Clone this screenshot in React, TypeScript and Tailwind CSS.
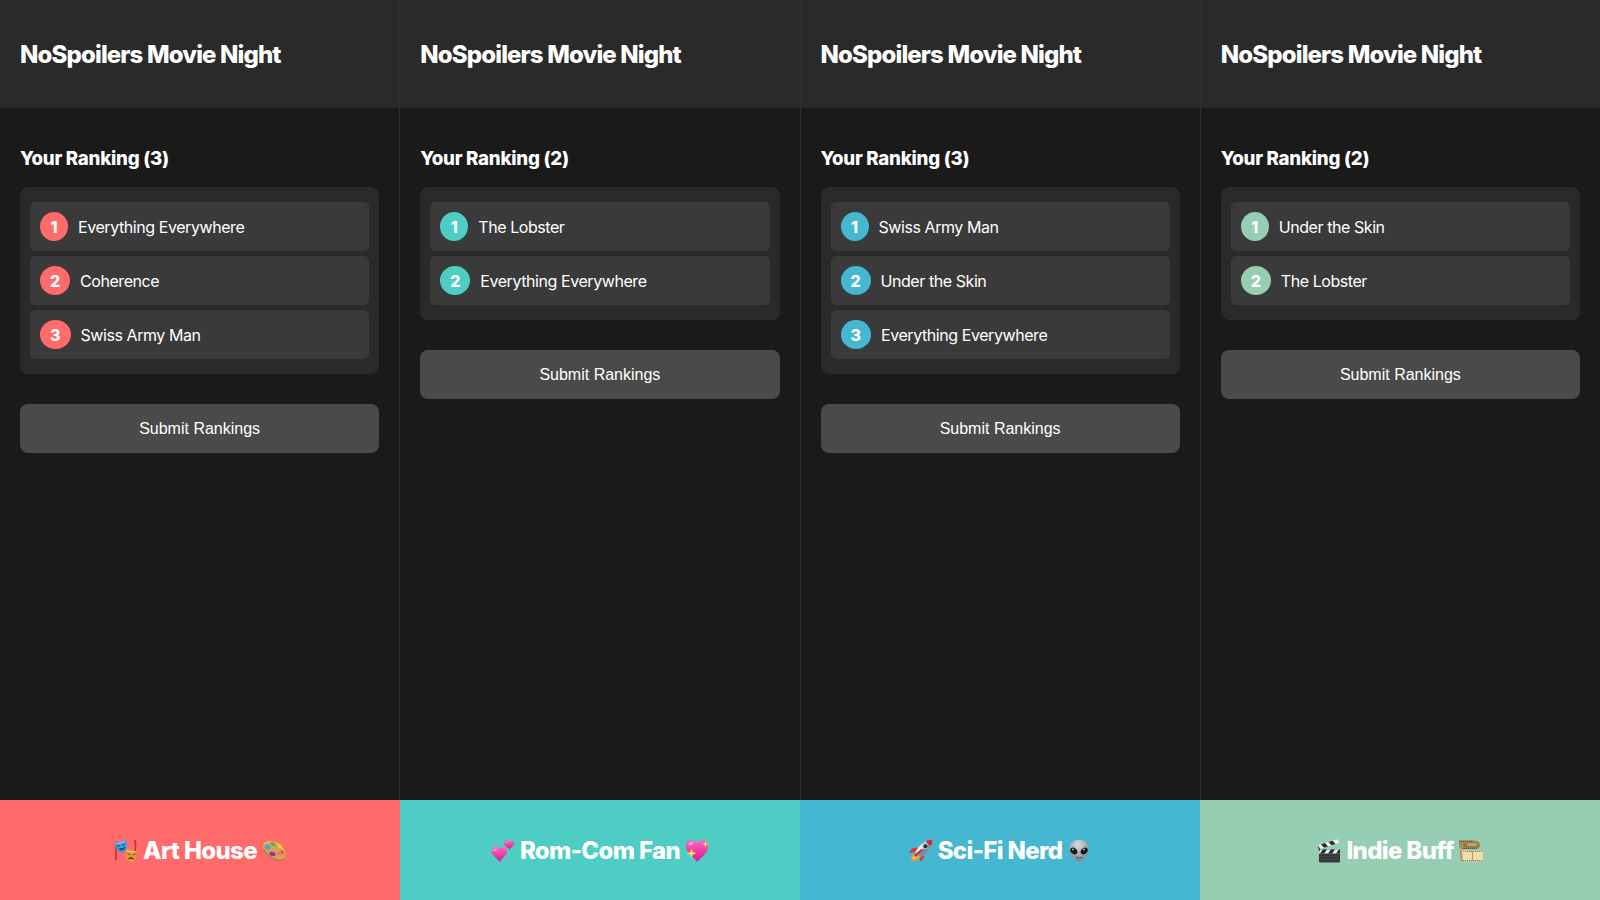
import type { ReactNode } from 'react';

function Masks() {
  return (
    <svg viewBox="0 0 24 24" className="size-6 shrink-0">
      <path d="M2.500 3C1 9 3 14 1.500 21.500M20.500 1C23.500 5 20 10 21.500 17" fill="none" stroke="#c42a2a" strokeWidth="1.500" />
      <path d="M1 3.500Q6 4 11.500 .5Q14 6 12 11Q10 14.500 7.500 14Q2 13 1 3.500Z" fill="#3d9bd8" />
      <path d="M1.500 4.500Q6 5 11 2" fill="none" stroke="#83cdf2" strokeWidth="1.200" />
      <path d="M3 7.500Q4.500 6 6 7M8 6.500Q9.500 4.500 11 5.500M5 9.500Q8.500 10.500 11 8Q10 11 7.500 11Q6 11 5 9.500" fill="#173d64" stroke="#173d64" strokeWidth=".5" />
      <path d="M12 10Q17 12.500 22.500 11.500Q23 18 20 21.500Q17.500 24 14.500 22Q11 18 12 10Z" fill="#e49b36" />
      <path d="M13 11.500Q17 13.500 21.500 12.500" fill="none" stroke="#ffd475" strokeWidth="1.200" />
      <path d="M13.500 14.500L16.500 16M19 16L21.500 14.800M14.500 20Q17 16.500 19.500 20Q17 18.500 14.500 20" fill="#56320c" stroke="#56320c" strokeWidth=".8" />
    </svg>
  );
}

function Palette() {
  return (
    <svg viewBox="0 0 24 24" className="size-6 shrink-0">
      <path d="M2 4Q8 0 16 4Q22 8 24 15Q25 20 20 21.500Q15 23 8 18Q-2 10 2 4ZM16 12.500Q14.500 15 18.500 16.500Q21 16.500 19.500 13.500Q17.500 11.500 16 12.500Z" fill="#d6a156" fillRule="evenodd" />
      <path d="M2 5Q8 1 16 5Q21 8 23 14" fill="none" stroke="#edc580" strokeWidth="1" />
      <path d="M2 11Q5 17 12 20Q18 23 23 20" fill="none" stroke="#a86c2b" strokeWidth="1" />
      <ellipse cx="11" cy="5" rx="2.700" ry="1.900" transform="rotate(25 11 5)" fill="#55b934" />
      <ellipse cx="5.500" cy="8" rx="3" ry="2.200" transform="rotate(30 5.500 8)" fill="#3fa9df" />
      <ellipse cx="10.500" cy="15" rx="3.200" ry="2.100" transform="rotate(15 10.500 15)" fill="#8735b4" />
      <ellipse cx="18" cy="7.500" rx="2.500" ry="1.700" transform="rotate(45 18 7.500)" fill="#ead32b" />
      <ellipse cx="20.500" cy="13" rx="2.200" ry="1.300" transform="rotate(40 20.500 13)" fill="#e84b4b" />
    </svg>
  );
}

function TwoHearts() {
  return (
    <svg viewBox="0 0 24 24" className="size-6 shrink-0">
      <defs>
        <linearGradient id="hearts" x1="0" y1="0" x2="0" y2="1">
          <stop stopColor="#ff69c4" />
          <stop offset="1" stopColor="#dc1b91" />
        </linearGradient>
      </defs>
      <path d="M9 23C6 19 1 17 .6 12.200C.3 7.500 6 5.800 8 10C11 6.500 16.500 8 16 12.800C15.500 17 11 19 9 23Z" fill="url(#hearts)" />
      <path d="M18.500 10.500C16.500 8.500 13 7 13 4C13 .8 16.800 0 18 2.800C20 .4 23.800 2 23.300 5C22.800 7.500 20 8.400 18.500 10.500Z" fill="url(#hearts)" />
      <ellipse cx="4" cy="11" rx="2" ry="1.400" transform="rotate(-30 4 11)" fill="#ff9ada" />
      <ellipse cx="15.500" cy="3.300" rx="1.200" ry=".8" fill="#ff9ada" />
    </svg>
  );
}

function SparkHeart() {
  return (
    <svg viewBox="0 0 24 24" className="size-6 shrink-0">
      <defs>
        <linearGradient id="spark-heart" x1="0" y1="0" x2="0" y2="1">
          <stop stopColor="#ff63c0" />
          <stop offset="1" stopColor="#d51b91" />
        </linearGradient>
      </defs>
      <path d="M12.500 23C8.500 17.500 1 14.500 1 7.200C1 0 9 -1 12 4.500C15 -1 23.300 0 23.300 7.200C23.300 14.500 16.500 17.500 12.500 23Z" fill="url(#spark-heart)" />
      <ellipse cx="6" cy="4.500" rx="3" ry="1.700" transform="rotate(-25 6 4.500)" fill="#ff96d7" />
      <path d="M20.500 2L21.300 4.200L23.500 5L21.300 5.900L20.500 8.500L19.500 5.900L17.500 5L19.500 4.200ZM6.500 9.500L7.800 13L11.500 14.300L7.800 15.600L6.500 19L5.200 15.600L1.500 14.300L5.200 13Z" fill="#ffdf55" />
    </svg>
  );
}

function Rocket() {
  return (
    <svg viewBox="0 0 24 24" className="size-6 shrink-0">
      <path d="M5 15L2 18L3 23L5.500 20.500L7 22.500L11 18Z" fill="#ff9d1b" />
      <path d="M5 16L4 20L8 18Z" fill="#fff06a" />
      <path d="M9 9Q2 8 .5 14L7 13ZM15 15Q16 20 11 22.500L11 17Z" fill="#e12f2b" />
      <path d="M6 13Q11 3 23.500 .5Q23 12 11.500 18.500Z" fill="#c6d4df" />
      <path d="M8 14Q14 5 23.500 .5Q23 12 11.500 18.500Z" fill="#6f91ae" />
      <path d="M7 13Q12 4 21 1.500L10 14Z" fill="#eaf1f5" />
      <path d="M17 2.300Q20 .8 23.500 .5Q23.500 3.500 22 6.800Q18.500 6 17 2.300Z" fill="#d52d2b" />
      <circle cx="16.500" cy="7.300" r="3" fill="#a9b5bd" />
      <circle cx="16.500" cy="7.300" r="2" fill="#26323b" />
      <path d="M5.500 17.500L13 10.500" stroke="#c92929" strokeWidth="2" />
    </svg>
  );
}

function Alien() {
  return (
    <svg viewBox="0 0 24 24" className="size-6 shrink-0">
      <defs>
        <radialGradient id="alien" cx=".45" cy=".25" r=".75">
          <stop stopColor="#d7dbdd" />
          <stop offset="1" stopColor="#7e878b" />
        </radialGradient>
      </defs>
      <path d="M12 .7C19 .7 22 5.500 21.500 10.500C21 16 16.500 22.500 12 22.500S3 16 2.500 10.500C2 5.500 5 .7 12 .7Z" fill="url(#alien)" />
      <ellipse cx="6.800" cy="12" rx="3.900" ry="2.900" transform="rotate(40 6.800 12)" fill="#17191a" />
      <ellipse cx="17.200" cy="12" rx="3.900" ry="2.900" transform="rotate(-40 17.200 12)" fill="#17191a" />
      <circle cx="6" cy="10.500" r=".9" fill="#c6cbce" />
      <circle cx="16.800" cy="10.500" r=".9" fill="#c6cbce" />
      <path d="M9 18Q12 20 15 18" fill="none" stroke="#4d5355" strokeWidth="1.200" />
    </svg>
  );
}

function Clapper() {
  return (
    <svg viewBox="0 0 24 24" className="size-6 shrink-0">
      <rect x="2" y="10.500" width="21" height="13" rx="1.500" fill="#34383a" />
      <rect x="2" y="10.500" width="21" height="4" fill="#e9ebea" />
      <path d="M3 14.500L6 10.500H10L7 14.500ZM11 14.500L14 10.500H18L15 14.500ZM19 14.500L22 10.500H23V14.500Z" fill="#242728" />
      <path d="M1 6L20.500 .2L22.500 3.800L3 10Z" fill="#ecedec" />
      <path d="M4 5.200L8 4L11 7.400L7 8.700ZM11.500 2.900L15.500 1.700L18.500 5L14.500 6.300Z" fill="#292c2d" />
      <path d="M1 6L3.500 10.500L2 13Z" fill="#45494a" />
      <path d="M3 17.500H22M3 20.300H22" stroke="#55595a" strokeWidth=".5" />
    </svg>
  );
}

function FilmReel() {
  return (
    <svg viewBox="0 0 24 24" className="size-6 shrink-0">
      <path d="M0 1.500H14Q21 1 21 5.500V8Q20 10 15 10H1L0 8Z" fill="#a58c5b" />
      <path d="M0 2.300H14M3 9.300H18" stroke="#51432b" strokeWidth="1" strokeDasharray="1.200 .8" />
      <path d="M4 6Q8 2.500 15 3.500Q21 4 20 7Q18 9 12 8.500Q6 8.500 4 6Z" fill="#8a7043" />
      <ellipse cx="13" cy="5.700" rx="5.500" ry="1.600" fill="#bea670" />
      <path d="M1 8.500Q3 11.500 10 11.500H24V22.500H5Q1 22 1 17Z" fill="#f0dcaa" />
      <path d="M2 11Q6 12.500 10 12.300H24M2 21.700H24" fill="none" stroke="#776341" strokeWidth="1" strokeDasharray="1.200 .8" />
      <path d="M13.500 12.500V21.500" stroke="#8c7447" strokeWidth=".7" />
      <path d="M1 9V19Q1 22 4 22.500L3 12Z" fill="#b99b62" />
    </svg>
  );
}

interface Player {
  name: string;
  color: string;
  before: ReactNode;
  after: ReactNode;
  picks: string[];
}

const players: Player[] = [
  { name: 'Art House', color: 'bg-[#ff6b6b]', before: <Masks />, after: <Palette />, picks: ['Everything Everywhere', 'Coherence', 'Swiss Army Man'] },
  { name: 'Rom-Com Fan', color: 'bg-[#4ecdc4]', before: <TwoHearts />, after: <SparkHeart />, picks: ['The Lobster', 'Everything Everywhere'] },
  { name: 'Sci-Fi Nerd', color: 'bg-[#45b7d1]', before: <Rocket />, after: <Alien />, picks: ['Swiss Army Man', 'Under the Skin', 'Everything Everywhere'] },
  { name: 'Indie Buff', color: 'bg-[#96ceb4]', before: <Clapper />, after: <FilmReel />, picks: ['Under the Skin', 'The Lobster'] },
];

const badgeWidths = ['w-7', 'w-[30px]', 'w-[30.5px]'];

function PlayerPanel({ player }: { player: Player }) {
  return (
    <section className="min-w-0 bg-[#1a1a1a]">
      <header className="flex h-[108px] items-center bg-[#2a2a2a] px-5 pt-px">
        <h1 className="whitespace-nowrap text-[24px] leading-7 font-extrabold tracking-[-0.86px]">NoSpoilers Movie Night</h1>
      </header>
      <main className="px-5 pt-10">
        <h2 className="text-[18.700px] leading-[22px] font-extrabold tracking-[-0.26px]">Your Ranking ({player.picks.length})</h2>
        <ol className="mt-[17px] flex flex-col gap-[5px] rounded-lg bg-[#2a2a2a] px-2.5 py-[15px]">
          {player.picks.map((pick, i) => (
            <li key={pick} className="flex h-[49px] items-center gap-2.5 rounded-[5px] bg-[#3a3a3a] px-2.5">
              <span className={`flex h-[29px] shrink-0 items-center justify-center rounded-[50%] text-base font-extrabold ${badgeWidths[i]} ${player.color}`}>{i + 1}</span>
              <span className="text-base tracking-[-0.43px]">{pick}</span>
            </li>
          ))}
        </ol>
        <button className="mt-[30px] h-[49px] w-full rounded-lg bg-[#4a4a4a] font-['Liberation_Sans',Arial,sans-serif] text-base">Submit Rankings</button>
      </main>
    </section>
  );
}

export default function App() {
  return (
    <div className="flex h-screen flex-col overflow-hidden font-[Inter,sans-serif] text-white">
      <div className="grid grow grid-cols-4 gap-px bg-[#303030]">
        {players.map((player) => (
          <PlayerPanel key={player.name} player={player} />
        ))}
      </div>
      <div className="grid h-[100px] shrink-0 grid-cols-4">
        {players.map((player) => (
          <footer key={player.name} className={`flex items-center justify-center gap-[5px] pt-0.5 text-[24px] font-extrabold tracking-[-0.65px] ${player.color}`}>
            {player.before}
            <span className="whitespace-nowrap">{player.name}</span>
            {player.after}
          </footer>
        ))}
      </div>
    </div>
  );
}
